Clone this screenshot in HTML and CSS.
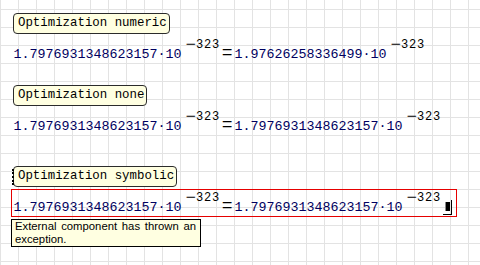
FILE: index.html
```html
<!DOCTYPE html>
<html>
<head>
<meta charset="utf-8">
<link rel="stylesheet" href="styles.css">
</head>
<body>
<div class="sheet">
  <section class="block b1">
    <div class="label">Optimization numeric</div>
    <div class="math"><span class="num">1.7976931348623157·10</span><span class="exp"><span class="neg">−</span>323</span><span class="eq">=</span><span class="num">1.97626258336499·10</span><span class="exp"><span class="neg">−</span>323</span></div>
  </section>
  <section class="block b2">
    <div class="label">Optimization none</div>
    <div class="math"><span class="num">1.7976931348623157·10</span><span class="exp"><span class="neg">−</span>323</span><span class="eq">=</span><span class="num">1.7976931348623157·10</span><span class="exp"><span class="neg">−</span>323</span></div>
  </section>
  <section class="block b3">
    <div class="label label-handle">Optimization symbolic</div>
    <div class="math math-error"><span class="num">1.7976931348623157·10</span><span class="exp"><span class="neg">−</span>323</span><span class="eq">=</span><span class="num">1.7976931348623157·10</span><span class="exp"><span class="neg">−</span>323</span><span class="caret"><span class="caret-bar"></span></span></div>
    <div class="tooltip">External component has thrown an exception.</div>
  </section>
</div>
</body>
</html>
```

FILE: styles.css
```css
html, body {
  margin: 0;
  padding: 0;
}
body {
  min-height: 100vh;
  background-color: #ffffff;
  background-image:
    linear-gradient(to right, #e3e3e3 1px, transparent 1px),
    linear-gradient(to bottom, #e3e3e3 1px, transparent 1px);
  background-size: 18px 18px, 18px 18px;
  background-position: 0 0, 0 9px;
}
.sheet {
  display: flex;
  flex-direction: column;
  padding-top: 13px;
}
.block {
  display: flex;
  flex-direction: column;
  align-items: flex-start;
}
.b2 { margin-top: 21px; }
.b3 { margin-top: 30px; }

.label {
  position: relative;
  box-sizing: border-box;
  height: 21px;
  margin-left: 13px;
  padding: 0 2px 1px 4px;
  border: 1px solid #2b2b2b;
  border-radius: 4px;
  background: #ffffe1;
  font-family: "Liberation Mono", monospace;
  font-size: 12.4px;
  line-height: 18px;
  color: #000;
  white-space: nowrap;
}
.label-handle::before {
  content: "";
  position: absolute;
  left: -2px;
  top: 2px;
  height: 16px;
  border-left: 2px dotted #000;
}

.math {
  box-sizing: border-box;
  height: 28px;
  margin-top: 2px;
  margin-left: 11px;
  padding: 3.3px 0 0 1.5px;
  border: 1px solid transparent;
  font-family: "Liberation Mono", monospace;
  font-size: 13.33px;
  line-height: 15px;
  white-space: nowrap;
}
.math-error {
  width: 446px;
  border-color: #e60000;
}
.num {
  color: #000060;
}
.exp {
  font-size: 12px;
  line-height: 11px;
  vertical-align: 10px;
  letter-spacing: 0.8px;
  color: #000;
  margin-left: 3.5px;
}
.neg {
  display: inline-block;
  width: 11px;
  letter-spacing: 0;
  text-align: center;
  transform: scaleX(1.45);
}
.eq {
  display: inline-block;
  width: 14.5px;
  text-align: center;
  font-size: 18px;
  line-height: 15px;
  color: #000;
}
.caret {
  display: inline-block;
  box-sizing: content-box;
  width: 8px;
  height: 14px;
  margin-left: 2px;
  border-right: 1px solid #000;
  border-bottom: 1px solid #000;
  vertical-align: -4px;
}
.caret-bar {
  display: block;
  width: 5px;
  height: 9px;
  margin: 2px 0 0 2px;
  background: linear-gradient(to right, #8a8a8a 0, #8a8a8a 1px, #000 1px, #000 100%);
}

.tooltip {
  box-sizing: border-box;
  width: 190px;
  margin-top: 2px;
  margin-left: 11px;
  padding: 0 4px 0 3px;
  border: 1px solid #000;
  background: #ffffe1;
  font-family: "Liberation Sans", Arial, sans-serif;
  font-size: 11.3px;
  line-height: 13px;
  color: #000;
  text-align: justify;
}
```
